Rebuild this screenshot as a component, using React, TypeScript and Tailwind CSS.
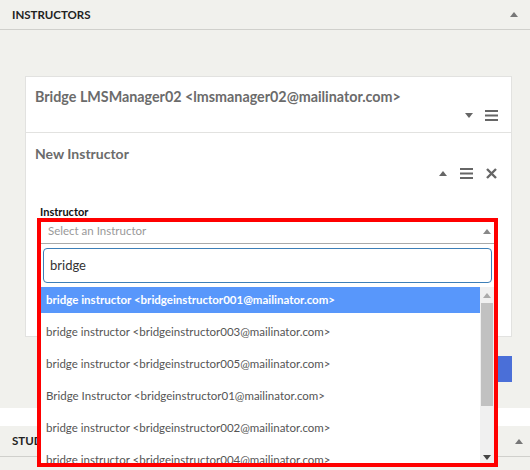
import React from 'react'

const font = { fontFamily: 'Lato, "Open Sans", sans-serif' }

function TriUp({ className = '' }: { className?: string }) {
  return (
    <svg width="8" height="5" viewBox="0 0 8 5" className={className}>
      <path d="M0 5 L4 0 L8 5 Z" fill="currentColor" />
    </svg>
  )
}

function TriDown({ className = '' }: { className?: string }) {
  return (
    <svg width="8" height="5" viewBox="0 0 8 5" className={className}>
      <path d="M0 0 L8 0 L4 5 Z" fill="currentColor" />
    </svg>
  )
}

function Burger() {
  return (
    <svg width="13" height="11" viewBox="0 0 13 11" className="text-[#666]">
      <rect x="0" y="0" width="13" height="2" fill="currentColor" />
      <rect x="0" y="4.5" width="13" height="2" fill="currentColor" />
      <rect x="0" y="9" width="13" height="2" fill="currentColor" />
    </svg>
  )
}

function Cross() {
  return (
    <svg width="11" height="11" viewBox="0 0 11 11" className="text-[#666]">
      <path d="M1 1 L10 10 M10 1 L1 10" stroke="currentColor" strokeWidth="2.4" />
    </svg>
  )
}

const options = [
  'bridge instructor <bridgeinstructor001@mailinator.com>',
  'bridge instructor <bridgeinstructor003@mailinator.com>',
  'bridge instructor <bridgeinstructor005@mailinator.com>',
  'Bridge Instructor <bridgeinstructor01@mailinator.com>',
  'bridge instructor <bridgeinstructor002@mailinator.com>',
  'bridge instructor <bridgeinstructor004@mailinator.com>',
  'bridge instructor <bridgeinstructor006@mailinator.com>',
]

export default function App() {
  return (
    <div className="relative w-[530px] h-[470px] overflow-hidden bg-[#f1f1ed]" style={font}>
      {/* section header */}
      <div className="h-[30px] flex items-center justify-between pl-3 pr-[12px] border-b border-[#d0d0cc]">
        <span className="text-[11.5px] font-bold text-[#222]">INSTRUCTORS</span>
        <TriUp className="text-[#777]" />
      </div>

      <div className="pl-[25px] pr-[18px] pt-[46px]">
        <div className="bg-white border border-[#e2e2e0]">
          {/* existing instructor */}
          <div className="h-[56px] border-b border-[#e2e2e0] px-[9px] pt-[10px]">
            <div className="text-[14.3px] font-bold text-[#6b6b6b] leading-[20px]">
              Bridge LMSManager02 &lt;lmsmanager02@mailinator.com&gt;
            </div>
            <div className="flex justify-end items-center gap-[12px] pr-[4px] mt-[3px]">
              <TriDown className="text-[#666]" />
              <Burger />
            </div>
          </div>

          {/* new instructor */}
          <div className="h-[203px] px-[9px] pt-[11px]">
            <div className="text-[14px] font-bold text-[#6b6b6b] leading-[20px]">New Instructor</div>
            <div className="flex justify-end items-center gap-[13px] pr-[5px] mt-[4px]">
              <TriUp className="text-[#666]" />
              <Burger />
              <Cross />
            </div>
            <div className="mt-[26px] pl-[5px] text-[11px] font-bold text-[#111] leading-[14px]">Instructor</div>
            <div className="relative ml-[5px] mr-[8px] h-[25px] border-b border-[#aaa] flex items-center justify-between pl-[8px] pr-[3px]">
              <span className="text-[11.5px] text-[#999]">Select an Instructor</span>
              <TriUp className="text-[#888]" />
            </div>
          </div>
        </div>

        <div className="flex justify-end mt-[19px]">
          <div className="w-[80px] h-[26px] bg-[#4a6fd8]" />
        </div>
      </div>

      <div className="absolute left-0 right-0 top-[408px] h-[18px] bg-white" />

      {/* students header */}
      <div className="absolute left-0 right-0 top-[426px] h-[31px] border-b border-[#d0d0cc] flex items-center justify-between pl-3 pr-[7px]">
        <span className="text-[11.5px] font-bold text-[#222]">STUDENTS</span>
        <TriUp className="text-[#777]" />
      </div>

      {/* dropdown */}
      <div className="absolute left-[41px] top-[246px] w-[453px] h-[217px] bg-white flex flex-col">
        <div className="mx-[2px] mt-[2px] h-[35px] rounded-[4px] border border-[#3d7fb8] flex items-center pl-[6px]">
          <span className="text-[13px] text-[#333]">bridge</span>
        </div>
        <div className="mt-[4px] flex flex-1 overflow-hidden">
          <div className="flex-1 flex flex-col gap-[6px] overflow-hidden">
            {options.map((o, i) => (
              <div
                key={o}
                className={
                  i === 0
                    ? 'h-[26px] shrink-0 flex items-center pl-[5px] text-[11.5px] font-bold text-white bg-[#5897fb]'
                    : 'h-[26px] shrink-0 flex items-center pl-[5px] text-[11.5px] text-[#555]'
                }
              >
                {o}
              </div>
            ))}
          </div>
          <div className="w-[14px] bg-[#f0f0f0] flex flex-col items-center">
            <TriUp className="text-[#aaa] mt-[6px]" />
            <div className="w-[12px] h-[103px] bg-[#c1c1c1] mt-[5px]" />
            <div className="flex-1" />
            <TriDown className="text-[#444] mb-[3px]" />
          </div>
        </div>
      </div>

      {/* highlight */}
      <div className="absolute left-[37px] top-[218px] w-[461px] h-[249px] border-[4px] border-[#ff0000] pointer-events-none" />
    </div>
  )
}
